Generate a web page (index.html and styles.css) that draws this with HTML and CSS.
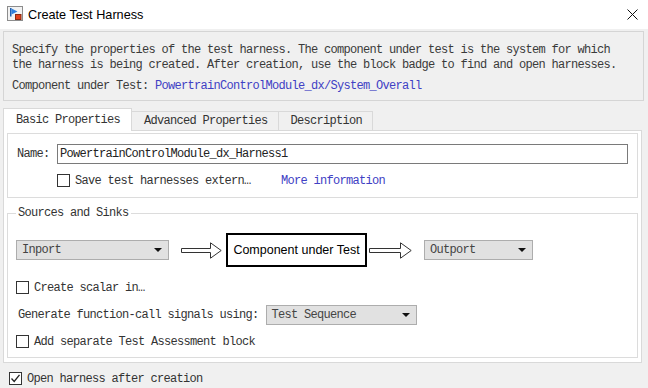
FILE: index.html
```html
<!DOCTYPE html>
<html lang="en">
<head>
    <meta charset="UTF-8">
    <title>Create Test Harness</title>
    <link rel="stylesheet" href="styles.css">
</head>
<body>
    <div class="titlebar">
        <svg class="app-icon" width="16" height="15" viewBox="0 0 16 15">
            <rect x="0.5" y="0.5" width="15" height="14" fill="#f2f2f2" stroke="#8c8c8c"/>
            <path d="M3 2 H4.5 V10.5 H3 Z" fill="#1f5fb0"/>
            <path d="M4.5 2.5 L10.5 5.5 L4.5 8.5 Z" fill="#2f80dc"/>
            <rect x="8.5" y="8.5" width="5.5" height="5" fill="#e0401a" stroke="#8a2a10"/>
        </svg>
        <span class="title">Create Test Harness</span>
        <svg class="close" width="11" height="11" viewBox="0 0 11 11">
            <path d="M0.5 0.5 L10.5 10.5 M10.5 0.5 L0.5 10.5" stroke="#111" stroke-width="1"/>
        </svg>
    </div>

    <div class="main">
        <div class="desc">
            <div>Specify the properties of the test harness. The component under test is the system for which<br>the harness is being created. After creation, use the block badge to find and open harnesses.</div>
            <div class="cut">Component under Test: <span class="link">PowertrainControlModule_dx/System_Overall</span></div>
        </div>

        <div class="tabs">
            <div class="tab active">Basic Properties</div>
            <div class="tab">Advanced Properties</div>
            <div class="tab">Description</div>
        </div>

        <div class="panel">
            <div class="group">
                <div class="name-row">
                    <label class="name-label" for="harness-name">Name:</label>
                    <input class="text-input" id="harness-name" type="text" value="PowertrainControlModule_dx_Harness1" readonly>
                </div>
                <div class="check-row save-row">
                    <span class="checkbox"></span>
                    <span class="trunc">Save test harnesses extern…</span>
                    <span class="link">More information</span>
                </div>
            </div>

            <fieldset class="sources">
                <legend>Sources and Sinks</legend>
                <div class="io-row">
                    <div class="dropdown inport">Inport<span class="caret"></span></div>
                    <svg class="flow-arrow first" width="41" height="17" viewBox="0 0 41 17">
                        <path d="M0.5 6.5 H29.5 V0.8 L40.2 8.5 L29.5 16.2 V10.5 H0.5 Z" fill="#fff" stroke="#333"/>
                    </svg>
                    <div class="cut-box">Component under Test</div>
                    <svg class="flow-arrow second" width="43" height="17" viewBox="0 0 43 17">
                        <path d="M0.5 6.5 H31.5 V0.8 L42.2 8.5 L31.5 16.2 V10.5 H0.5 Z" fill="#fff" stroke="#333"/>
                    </svg>
                    <div class="dropdown outport">Outport<span class="caret"></span></div>
                </div>
                <div class="check-row scalar-row">
                    <span class="checkbox"></span>
                    <span>Create scalar in…</span>
                </div>
                <div class="gen-row">
                    <span>Generate function-call signals using:</span>
                    <div class="dropdown sequence">Test Sequence<span class="caret"></span></div>
                </div>
                <div class="check-row assess-row">
                    <span class="checkbox"></span>
                    <span>Add separate Test Assessment block</span>
                </div>
            </fieldset>
        </div>

        <div class="check-row open-row">
            <span class="checkbox checked">
                <svg width="11" height="11" viewBox="0 0 11 11">
                    <path d="M1.5 5.5 L4.2 8.5 L9.5 1.8" fill="none" stroke="#222" stroke-width="1.3"/>
                </svg>
            </span>
            <span>Open harness after creation</span>
        </div>
    </div>
</body>
</html>
```

FILE: styles.css
```css
/* General Styles */
* {
    box-sizing: border-box;
}

body {
    margin: 0;
    width: 648px;
    height: 388px;
    overflow: hidden;
    background-color: #f0f0f0;
    font-family: "Liberation Mono", monospace;
    font-size: 12px;
    letter-spacing: -0.7px;
    color: #333;
}

.link {
    color: #4040c4;
}

/* Title Bar */
.titlebar {
    height: 29px;
    background-color: #ffffff;
    display: flex;
    align-items: center;
    padding: 0 10px 0 7px;
}

.app-icon {
    margin-top: -3px;
}

.title {
    margin-left: 5px;
    font-family: "Liberation Sans", Arial, sans-serif;
    font-size: 12.7px;
    letter-spacing: 0;
    color: #000;
}

.close {
    margin-left: auto;
}

/* Main Content */
.main {
    padding: 2px 4px 0 3px;
}

.desc {
    border: 1px solid #d5d5d5;
    padding: 11px 8px 6px 8px;
    line-height: 15px;
    color: #3a3a3a;
}

.desc .cut {
    margin-top: 6px;
}

/* Tabs */
.tabs {
    display: flex;
    align-items: flex-end;
    margin-top: 7px;
}

.tab {
    height: 19px;
    line-height: 18px;
    padding: 0 10px 0 12px;
    border: 1px solid #d9d9d9;
    border-bottom: none;
    border-left: none;
    background-color: #f0f0f0;
}

.tab.active {
    position: relative;
    z-index: 1;
    height: 23px;
    line-height: 22px;
    margin-bottom: -1px;
    padding-right: 11px;
    border-left: 1px solid #d9d9d9;
    background-color: #ffffff;
}

.panel {
    background-color: #ffffff;
    border: 1px solid #d9d9d9;
    margin-right: 2px;
    padding: 2px 3px 4px 3px;
}

/* Name Group */
.group {
    border: 1px solid #dcdcdc;
    padding: 10px 9px 9px 9px;
}

.name-row {
    display: flex;
    align-items: center;
    height: 20px;
}

.name-label {
    width: 40px;
    flex: none;
}

.text-input {
    flex: 1;
    height: 20px;
    border: 1px solid #7a7a7a;
    padding: 0 2px;
    font: inherit;
    letter-spacing: inherit;
    color: #222;
    background-color: #fff;
    outline: none;
}

/* Checkbox Rows */
.check-row {
    display: flex;
    align-items: center;
    height: 15px;
}

.checkbox {
    width: 13px;
    height: 13px;
    flex: none;
    border: 1px solid #333;
    background-color: #fff;
    margin-right: 5px;
    display: flex;
    align-items: center;
    justify-content: center;
}

.save-row {
    margin-top: 9px;
    padding-left: 40px;
}

.trunc {
    width: 206px;
    flex: none;
}

/* Sources and Sinks */
.sources {
    margin: 8px 0 0 0;
    border: 1px solid #dcdcdc;
    padding: 0 8px 8px 8px;
    min-width: 0;
}

.sources legend {
    padding: 0 2px;
    line-height: 15px;
}

.io-row {
    display: flex;
    align-items: center;
    height: 34px;
    margin-top: 12px;
}

.dropdown {
    height: 20px;
    flex: none;
    display: flex;
    align-items: center;
    justify-content: space-between;
    padding: 0 6px 0 5px;
    background-color: #e1e1e1;
    border: 1px solid #adadad;
    color: #444;
}

.caret {
    width: 0;
    height: 0;
    border-left: 4px solid transparent;
    border-right: 4px solid transparent;
    border-top: 4px solid #111;
}

.inport {
    width: 153px;
}

.outport {
    width: 109px;
    margin-left: 12px;
}

.flow-arrow {
    flex: none;
}

.flow-arrow.first {
    margin-left: 12px;
}

.flow-arrow.second {
    margin-left: 2px;
}

.cut-box {
    width: 141px;
    height: 34px;
    margin-left: 4px;
    border: 2px solid #000;
    display: flex;
    align-items: center;
    justify-content: center;
    font-family: "Liberation Sans", Arial, sans-serif;
    font-size: 12.5px;
    letter-spacing: 0;
    color: #000;
}

.scalar-row {
    margin-top: 13px;
}

.gen-row {
    display: flex;
    align-items: center;
    height: 20px;
    margin-top: 10px;
    padding-left: 2px;
}

.sequence {
    width: 151px;
    margin-left: 7px;
}

.assess-row {
    margin-top: 9px;
}

/* Footer Option */
.open-row {
    margin-top: 8px;
    padding-left: 6px;
}
```
